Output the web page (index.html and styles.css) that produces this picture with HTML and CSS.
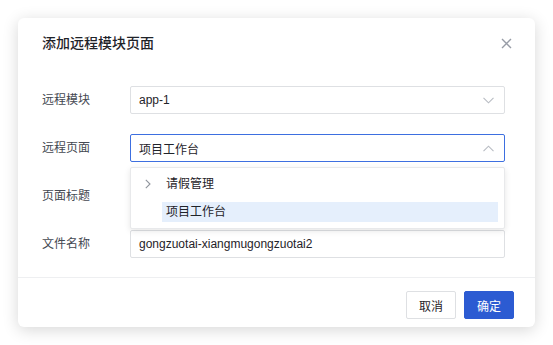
FILE: index.html
```html
<!DOCTYPE html>
<html lang="zh-CN">
<head>
    <meta charset="UTF-8">
    <meta name="viewport" content="width=device-width, initial-scale=1.0">
    <title>添加远程模块页面</title>
    <link rel="stylesheet" href="styles.css">
</head>
<body>
    <div class="dialog">
        <div class="dialog-header">
            <h2 class="dialog-title">添加远程模块页面</h2>
            <button class="close-btn" aria-label="关闭">
                <svg width="11" height="11" viewBox="0 0 11 11"><path d="M1 1L10 10M10 1L1 10" stroke="#979ca6" stroke-width="1.4" fill="none"/></svg>
            </button>
        </div>

        <div class="dialog-body">
            <div class="form-row">
                <label class="form-label">远程模块</label>
                <div class="field">
                    <div class="select">
                        <span>app-1</span>
                        <svg class="arrow" width="11" height="7" viewBox="0 0 11 7"><path d="M0.5 0.8L5.5 5.8L10.5 0.8" stroke="#b8bcc3" stroke-width="1.1" fill="none"/></svg>
                    </div>
                </div>
            </div>

            <div class="form-row">
                <label class="form-label">远程页面</label>
                <div class="field">
                    <div class="select active">
                        <span>项目工作台</span>
                        <svg class="arrow" width="11" height="7" viewBox="0 0 11 7"><path d="M0.5 6.2L5.5 1.2L10.5 6.2" stroke="#b8bcc3" stroke-width="1.1" fill="none"/></svg>
                    </div>

                    <!-- tree dropdown, lies over the rows below -->
                    <div class="dropdown">
                        <div class="tree-node">
                            <span class="expander">
                                <svg width="6" height="10" viewBox="0 0 6 10"><path d="M0.8 0.8L5 5L0.8 9.2" stroke="#8f949c" stroke-width="1.1" fill="none"/></svg>
                            </span>
                            <span class="node-label">请假管理</span>
                        </div>
                        <div class="tree-node">
                            <span class="expander"></span>
                            <span class="node-label selected">项目工作台</span>
                        </div>
                    </div>
                </div>
            </div>

            <div class="form-row">
                <label class="form-label">页面标题</label>
                <div class="field">
                    <div class="input">项目工作台</div>
                </div>
            </div>

            <div class="form-row">
                <label class="form-label">文件名称</label>
                <div class="field">
                    <div class="input">gongzuotai-xiangmugongzuotai2</div>
                </div>
            </div>
        </div>

        <div class="dialog-footer">
            <button class="btn">取消</button>
            <button class="btn btn-primary">确定</button>
        </div>
    </div>
</body>
</html>
```

FILE: styles.css
```css
* {
    box-sizing: border-box;
}

body {
    margin: 0;
    padding: 18px;
    width: 553px;
    height: 345px;
    background-color: #fff;
    font-family: "Liberation Sans", "Noto Sans CJK SC", sans-serif;
    font-size: 12px;
    color: #1f2329;
    overflow: hidden;
}

.dialog {
    height: 309px;
    background-color: #fff;
    border-radius: 6px;
    box-shadow: 0 3px 16px rgba(0, 0, 0, 0.16);
    display: flex;
    flex-direction: column;
}

.dialog-header {
    display: flex;
    justify-content: space-between;
    align-items: center;
    padding: 14px 23px 14px 24px;
}

.dialog-title {
    margin: 0;
    font-size: 14px;
    font-weight: 500;
    line-height: 22px;
    color: #1f2329;
}

.close-btn {
    border: none;
    background: none;
    padding: 0;
    width: 11px;
    height: 11px;
    display: flex;
    cursor: pointer;
}

.dialog-body {
    flex: 1;
    padding: 18px 30px 0 24px;
    display: flex;
    flex-direction: column;
    gap: 20px;
}

.form-row {
    display: flex;
    align-items: center;
}

.form-label {
    width: 88px;
    flex-shrink: 0;
    color: #444851;
    line-height: 20px;
}

.field {
    flex: 1;
    position: relative;
}

.select,
.input {
    height: 28px;
    border: 1px solid #dee0e3;
    border-radius: 2px;
    padding: 0 10px 0 8px;
    display: flex;
    align-items: center;
    justify-content: space-between;
    background-color: #fff;
    color: #1f2329;
}

.select.active {
    border-color: #3d6fe0;
}

.dropdown {
    position: absolute;
    top: 33px;
    left: 0;
    right: 0;
    z-index: 10;
    background-color: #fff;
    border: 1px solid #e8e9eb;
    border-radius: 2px;
    box-shadow: 0 2px 6px rgba(0, 0, 0, 0.1);
    padding: 6px 6px 6px 8px;
    display: flex;
    flex-direction: column;
    gap: 8px;
}

.tree-node {
    display: flex;
    align-items: center;
    height: 20px;
}

.expander {
    width: 23px;
    flex-shrink: 0;
    display: flex;
    align-items: center;
    padding-left: 6px;
}

.node-label {
    flex: 1;
    height: 20px;
    line-height: 20px;
    padding: 0 4px;
    color: #1f2329;
}

.node-label.selected {
    background-color: #e5effc;
}

.dialog-footer {
    border-top: 1px solid #eeeff1;
    padding: 13px 21px 8px;
    display: flex;
    justify-content: flex-end;
    gap: 8px;
}

.btn {
    width: 50px;
    height: 28px;
    border: 1px solid #dee0e3;
    border-radius: 2px;
    background-color: #fff;
    color: #1f2329;
    font-family: inherit;
    font-size: 12px;
    padding: 0;
    cursor: pointer;
}

.btn-primary {
    background-color: #2c5bd2;
    border-color: #2c5bd2;
    color: #fff;
}
```
